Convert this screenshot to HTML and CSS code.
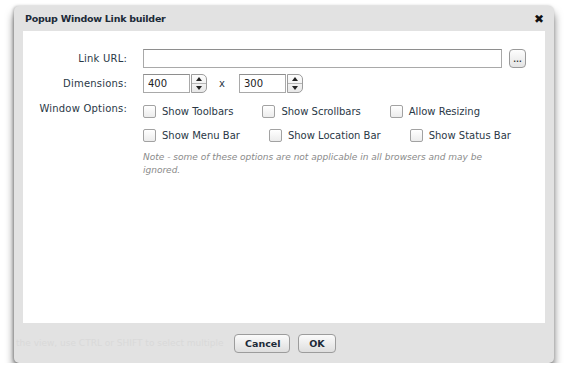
FILE: index.html
```html
<!DOCTYPE html>
<html lang="en">
<head>
    <meta charset="UTF-8">
    <title>Popup Window Link builder</title>
    <link rel="stylesheet" href="styles.css">
</head>
<body>

<div class="dialog">
    <div class="titlebar">
        <span class="title">Popup Window Link builder</span>
        <span class="close">&#x2716;</span>
    </div>

    <div class="content">
        <div class="form">
            <label class="label" for="url">Link URL:</label>
            <div class="field url-field">
                <input type="text" id="url" class="text-input url-input">
                <button class="browse-btn" type="button">&hellip;</button>
            </div>

            <label class="label" for="width">Dimensions:</label>
            <div class="field">
                <input type="text" id="width" class="text-input dim-input" value="400">
                <span class="spinner"><span class="up"></span><span class="down"></span></span>
                <span class="times">x</span>
                <input type="text" id="height" class="text-input dim-input" value="300">
                <span class="spinner"><span class="up"></span><span class="down"></span></span>
            </div>

            <span class="label label-options">Window Options:</span>
            <div class="options">
                <div class="option-row">
                    <label class="option"><span class="check"></span>Show Toolbars</label>
                    <label class="option"><span class="check"></span>Show Scrollbars</label>
                    <label class="option"><span class="check"></span>Allow Resizing</label>
                </div>
                <div class="option-row">
                    <label class="option"><span class="check"></span>Show Menu Bar</label>
                    <label class="option"><span class="check"></span>Show Location Bar</label>
                    <label class="option"><span class="check"></span>Show Status Bar</label>
                </div>
                <p class="note">Note - some of these options are not applicable in all browsers and may be ignored.</p>
            </div>
        </div>
    </div>

    <div class="footer">
        <span class="ghost">the view, use CTRL or SHIFT to select multiple</span>
        <div class="buttons">
            <button class="btn" type="button">Cancel</button>
            <button class="btn" type="button">OK</button>
        </div>
    </div>
</div>

</body>
</html>
```

FILE: styles.css
```css
body {
    margin: 0;
    background: #ffffff;
    font-family: "DejaVu Sans", Verdana, sans-serif;
    font-size: 10px;
    color: #1f2d3b;
}

.dialog {
    width: 540px;
    height: 357px;
    margin: 6px 0 0 14px;
    background: #e2e2e2;
    border-radius: 5px;
    box-shadow: 0 7px 9px rgba(0, 0, 0, 0.55), -1px 0 3px rgba(0, 0, 0, 0.25);
    display: flex;
    flex-direction: column;
}

.titlebar {
    height: 25px;
    display: flex;
    align-items: center;
    justify-content: space-between;
    padding: 0 10px 0 11px;
}

.title {
    font-weight: bold;
    font-size: 9.5px;
    letter-spacing: -0.25px;
    color: #1c2a38;
}

.close {
    font-size: 12px;
    color: #111;
}

.content {
    margin: 0 9px;
    height: 292px;
    background: #ffffff;
}

.form {
    display: grid;
    grid-template-columns: 104px 1fr;
    column-gap: 16px;
    row-gap: 6px;
    padding-top: 18px;
    align-items: center;
}

.label {
    text-align: right;
    color: #2a3846;
    letter-spacing: 0.2px;
    white-space: nowrap;
}

.label-options {
    align-self: start;
    padding-top: 4px;
}

.field {
    display: flex;
    align-items: center;
}

.text-input {
    box-sizing: border-box;
    height: 19px;
    border: 1px solid #a9a9a9;
    border-top-color: #8e8e8e;
    font-family: "DejaVu Sans", Verdana, sans-serif;
    font-size: 10px;
    color: #222;
    padding: 0 4px;
    margin: 0;
}

.url-input {
    width: 359px;
}

.browse-btn {
    box-sizing: border-box;
    width: 17px;
    height: 19px;
    margin-left: 7px;
    padding: 0;
    border: 1px solid #9a9a9a;
    border-radius: 4px;
    background: linear-gradient(#fdfdfd, #e4e4e4);
    font-size: 9px;
    font-weight: bold;
    color: #333;
    line-height: 14px;
}

.dim-input {
    width: 47px;
}

.spinner {
    box-sizing: border-box;
    width: 16px;
    height: 19px;
    margin-left: 1px;
    border: 1px solid #9d9d9d;
    border-radius: 0 5px 5px 0;
    background: linear-gradient(#fdfdfd, #e8e8e8);
    display: flex;
    flex-direction: column;
}

.spinner .up,
.spinner .down {
    flex: 1;
    display: flex;
    align-items: center;
    justify-content: center;
}

.spinner .up {
    border-bottom: 1px solid #b5b5b5;
}

.spinner .up::before {
    content: "";
    border-left: 3px solid transparent;
    border-right: 3px solid transparent;
    border-bottom: 4px solid #222;
}

.spinner .down::before {
    content: "";
    border-left: 3px solid transparent;
    border-right: 3px solid transparent;
    border-top: 4px solid #222;
}

.times {
    margin: 0 14px 0 12px;
    color: #2a3846;
}

.options {
    min-width: 0;
}

.option-row {
    display: flex;
    height: 24px;
    align-items: center;
}

.option {
    display: flex;
    align-items: center;
    flex-shrink: 0;
    white-space: nowrap;
    margin-right: 29px;
    color: #2a3846;
}

.check {
    box-sizing: border-box;
    width: 13px;
    height: 13px;
    border: 1px solid #a2a2a2;
    border-radius: 2px;
    background: linear-gradient(#ffffff, #ececec);
    margin-right: 6px;
}

.note {
    margin: 4px 0 0 0;
    width: 360px;
    font-family: "DejaVu Sans", Verdana, sans-serif;
    font-style: italic;
    font-size: 9px;
    line-height: 13px;
    color: #8a8a8a;
}

.footer {
    flex: 1;
    display: grid;
    align-items: center;
}

.footer > * {
    grid-area: 1 / 1;
}

.ghost {
    font-size: 9px;
    color: #d9d9d9;
    padding-left: 2px;
}

.buttons {
    display: flex;
    justify-content: center;
    gap: 8px;
    padding-left: 2px;
}

.btn {
    box-sizing: border-box;
    height: 19px;
    padding: 0 10px;
    min-width: 38px;
    border: 1px solid #9c9c9c;
    border-radius: 4px;
    background: linear-gradient(#fbfbfb, #dedede);
    font-family: "DejaVu Sans", Verdana, sans-serif;
    font-weight: bold;
    font-size: 9.5px;
    color: #1c2a38;
}

.btn:first-child {
    width: 56px;
}
```
